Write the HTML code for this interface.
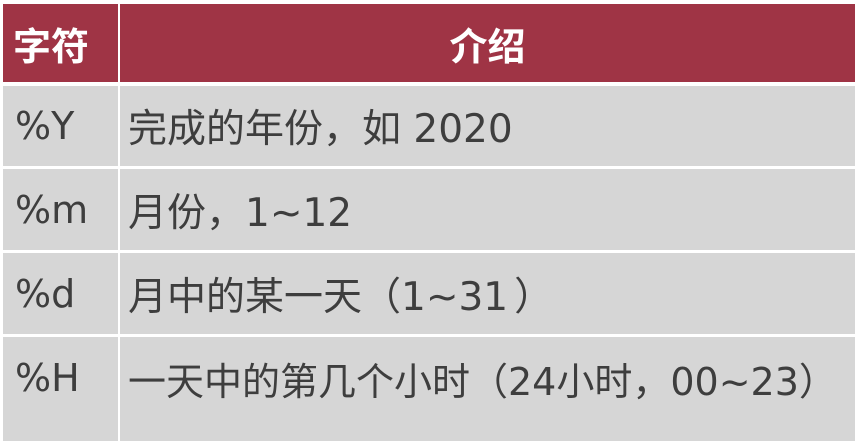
<!DOCTYPE html>
<html><head><meta charset="utf-8"><style>
body{margin:0;width:857px;height:445px;background:#fff;position:relative;overflow:hidden;font-family:"DejaVu Sans","Noto Sans CJK SC",sans-serif;}
.c{position:absolute;display:flex;align-items:center;box-sizing:border-box;white-space:nowrap;}
.h{background:#9f3445;color:#fff;font-weight:bold;font-size:38px;font-family:"Noto Sans CJK SC",sans-serif;}
.g{background:#d6d6d6;color:#3e3e3e;font-size:39px;padding-left:12px;}
</style></head><body>
<div class="c h" style="left:3px;top:4px;width:115px;height:78px;padding-left:10px">字符</div>
<div class="c h" style="left:120px;top:4px;width:735px;height:78px;justify-content:center">介绍</div>

<div class="c g" style="left:3px;top:86px;width:115px;height:80px;font-size:38px">%Y</div>
<div class="c g" style="left:120px;top:86px;width:735px;height:80px;padding-left:8px">完成的年份，如 2020</div>

<div class="c g" style="left:3px;top:169px;width:115px;height:81px;font-size:38px">%m</div>
<div class="c g" style="left:120px;top:169px;width:735px;height:81px;padding-left:8px">月份，1~12</div>

<div class="c g" style="left:3px;top:253px;width:115px;height:81px;font-size:38px">%d</div>
<div class="c g" style="left:120px;top:253px;width:735px;height:81px;padding-left:8px">月中的某一天（1~31<span style="margin-left:6px">）</span></div>

<div class="c g" style="left:3px;top:337px;width:115px;height:104px;padding-bottom:22px;font-size:38px">%H</div>
<div class="c g" style="left:120px;top:337px;width:735px;height:104px;padding-left:8px;padding-bottom:22px;font-size:38px">一天中的第几个小时（24小时，00~23）</div>
</body></html>
